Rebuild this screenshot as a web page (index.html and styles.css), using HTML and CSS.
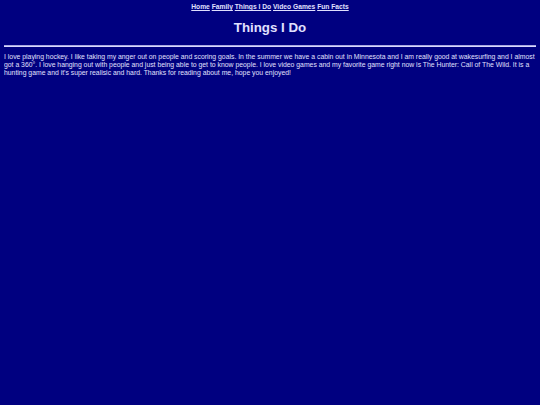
FILE: index.html
```html
<!DOCTYPE html>
<html>
<head>
<meta charset="utf-8">
<link rel="stylesheet" href="styles.css">
</head>
<body>
<nav class="nav">
<a href="#">Home</a> <a href="#">Family</a> <a href="#">Things I Do</a> <a href="#">Video Games</a> <a href="#">Fun Facts</a>
</nav>
<h1 class="title">Things I Do</h1>
<hr class="rule">
<p class="text">I love playing hockey. I like taking my anger out on people and scoring goals. In the summer we have a cabin out in Minnesota and I am really good at wakesurfing and I almost got a 360°. I love hanging out with people and just being able to get to know people. I love video games and my favorite game right now is The Hunter: Call of The Wild. It is a hunting game and it's super realisic and hard. Thanks for reading about me, hope you enjoyed!</p>
</body>
</html>
```
FILE: styles.css
```css
html, body {
  background: #000080;
}
body {
  margin: 3px 4px 4px;
  color: #e0e0ff;
  font-family: "Liberation Sans", Arial, sans-serif;
}
.nav {
  text-align: center;
  font-size: 6.7px;
  font-weight: bold;
  line-height: 8px;
}
.nav a {
  color: #e0e0ff;
  text-decoration: underline;
}
.title {
  text-align: center;
  font-size: 13.3px;
  font-weight: bold;
  margin: 9px 0 0;
  line-height: 16px;
}
.rule {
  border: none;
  border-top: 1px solid #a8a8e0;
  border-bottom: 1px solid #d8d8ff;
  margin: 9px 0 0;
  height: 0;
}
.text {
  font-size: 6.85px;
  line-height: 8px;
  margin: 6px 0 0;
}
```
